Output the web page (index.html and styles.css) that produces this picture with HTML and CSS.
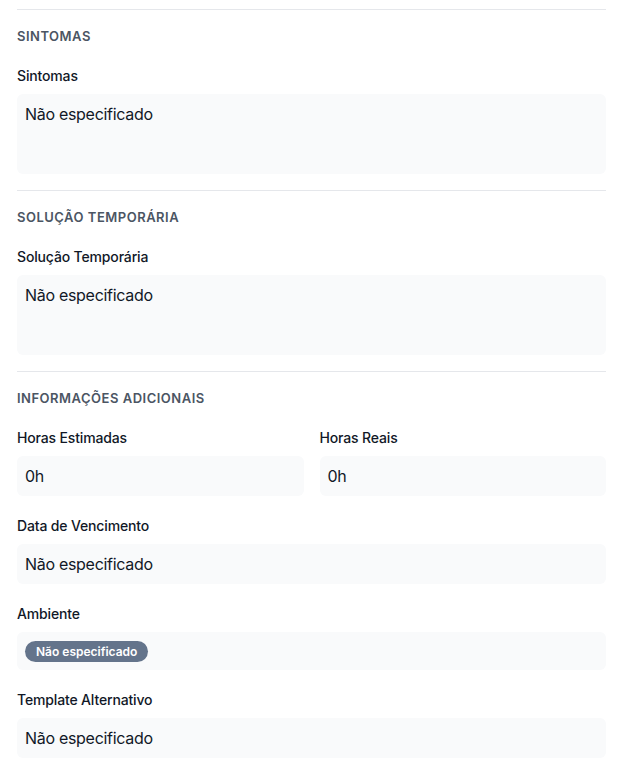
FILE: index.html
```html
<!DOCTYPE html>
<html lang="pt">
<head>
<meta charset="utf-8">
<title>Detalhes</title>
<link rel="stylesheet" href="styles.css">
</head>
<body>
<div class="page">
  <section class="section">
    <h3 class="section-title">Sintomas</h3>
    <div class="fields">
      <div class="field">
        <div class="label">Sintomas</div>
        <div class="value value-multi">Não especificado</div>
      </div>
    </div>
  </section>
  <section class="section">
    <h3 class="section-title">Solução Temporária</h3>
    <div class="fields">
      <div class="field">
        <div class="label">Solução Temporária</div>
        <div class="value value-multi">Não especificado</div>
      </div>
    </div>
  </section>
  <section class="section">
    <h3 class="section-title">Informações Adicionais</h3>
    <div class="fields">
      <div class="row">
        <div class="field">
          <div class="label">Horas Estimadas</div>
          <div class="value">0h</div>
        </div>
        <div class="field">
          <div class="label">Horas Reais</div>
          <div class="value">0h</div>
        </div>
      </div>
      <div class="field">
        <div class="label">Data de Vencimento</div>
        <div class="value">Não especificado</div>
      </div>
      <div class="field">
        <div class="label">Ambiente</div>
        <div class="value value-badge"><span class="badge">Não especificado</span></div>
      </div>
      <div class="field">
        <div class="label">Template Alternativo</div>
        <div class="value">Não especificado</div>
      </div>
    </div>
  </section>
</div>
</body>
</html>
```
FILE: styles.css
```css
* { box-sizing: border-box; }
html, body { margin: 0; padding: 0; background: #ffffff; }
body {
  font-family: Inter, "Noto Sans", "Liberation Sans", sans-serif;
  color: #111827;
}
.page {
  padding: 9px 13px 0 17px;
}
.section {
  border-top: 1px solid #e5e7eb;
  padding: 16px 0;
}
.section-title {
  margin: 0 0 19px;
  font-size: 13px;
  line-height: 20px;
  font-weight: 600;
  text-transform: uppercase;
  letter-spacing: 0.5px;
  color: #4b5563;
}
.fields {
  display: flex;
  flex-direction: column;
  gap: 19px;
}
.row {
  display: grid;
  grid-template-columns: 1fr 1fr;
  gap: 16px;
}
.label {
  font-size: 14px;
  line-height: 21px;
  font-weight: 500;
  letter-spacing: -0.15px;
  color: #111827;
  margin-bottom: 8px;
}
.value {
  background: #f9fafb;
  border-radius: 6px;
  padding: 8px;
  font-size: 16px;
  line-height: 24px;
  letter-spacing: -0.3px;
  color: #111827;
}
.value-multi {
  min-height: 80px;
}
.value-badge {
  display: flex;
  align-items: center;
  height: 38px;
  padding: 8px;
}
.badge {
  display: inline-block;
  background: #64748b;
  color: #ffffff;
  font-size: 12px;
  line-height: 21px;
  font-weight: 600;
  letter-spacing: 0;
  padding: 0 11px;
  border-radius: 9999px;
}
```
